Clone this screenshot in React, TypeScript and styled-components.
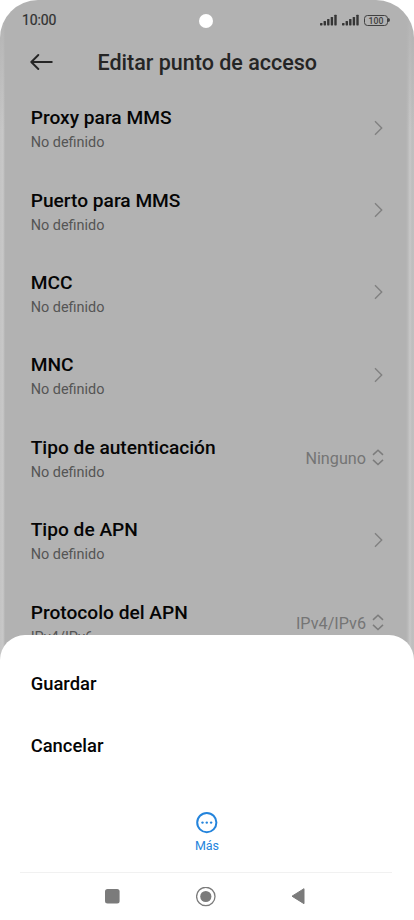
import React from "react";
import styled, { createGlobalStyle } from "styled-components";

const Global = createGlobalStyle`
  html, body { margin: 0; padding: 0; background: #fff; }
  body { font-family: Roboto, "Liberation Sans", sans-serif; }
  * { box-sizing: border-box; }
`;

const Phone = styled.div`
  position: relative;
  width: 414px;
  height: 920px;
  overflow: hidden;
  background: #fff;
`;

const Page = styled.div`
  height: 680px;
  overflow: hidden;
  border-radius: 38px 38px 0 0;
  background:
    linear-gradient(180deg, #b2b2b2 0, #b2b2b200 130px),
    linear-gradient(90deg, #c4c4c4 0, #c8c8c8 3px, #b2b2b2 5px, #b2b2b2 406px, #bababa 408px, #c8c8c8 410px, #bebebe 412px, #c0c0c0 414px);
`;

const StatusBar = styled.header`
  display: grid;
  grid-template-columns: 1fr 14px 1fr;
  align-items: center;
  height: 40px;
  padding: 0 24px 0 22px;
`;

const Clock = styled.span`
  font-size: 14px;
  font-weight: 400;
  letter-spacing: -0.15px;
  color: #303030;
  -webkit-text-stroke: 0.2px #303030;
`;

const Camera = styled.span`
  width: 14px;
  height: 14px;
  margin-top: 2px;
  border-radius: 50%;
  background: #fff;
`;

const Indicators = styled.div`
  display: flex;
  justify-content: flex-end;
  align-items: center;
  gap: 5px;
`;

const Battery = styled.div`
  display: flex;
  align-items: center;
`;

const BatteryCase = styled.span`
  width: 24px;
  height: 11px;
  border: 1px solid #404040;
  border-radius: 3.5px;
  font-size: 8.7px;
  font-weight: 500;
  line-height: 10px;
  text-align: center;
  color: #404040;
`;

const BatteryTip = styled.span`
  width: 2px;
  height: 4px;
  border-radius: 0 2px 2px 0;
  background: #404040;
`;

const TitleBar = styled.div`
  display: flex;
  align-items: center;
  height: 45px;
  padding-left: 30px;
  gap: 43.5px;
`;

const Title = styled.h1`
  margin: 0;
  font-size: 21.5px;
  font-weight: 500;
  line-height: 26px;
  padding-top: 1px;
  color: #252525;
  white-space: nowrap;
`;

const Settings = styled.main`
  padding: 1.5px 30px 0 30.7px;
`;

const Row = styled.div`
  display: flex;
  justify-content: space-between;
  align-items: center;
  height: 82.4px;
`;

const Labels = styled.div`
  display: flex;
  flex-direction: column;
  padding-top: 4px;
`;

const Name = styled.span`
  font-size: 19.15px;
  font-weight: 500;
  line-height: 26px;
  color: #050505;
`;

const Detail = styled.span`
  font-size: 14.45px;
  line-height: 23px;
  color: #555;
`;

const Choice = styled.div`
  display: flex;
  align-items: center;
  gap: 6px;
  padding-top: 2px;
  font-size: 16.2px;
  color: #757575;
`;

const Sheet = styled.section`
  position: absolute;
  inset: 635px 0 0;
  display: flex;
  flex-direction: column;
  border-radius: 25px 25px 0 0;
  background: #fff;
`;

const Options = styled.div`
  padding: 18px 30.7px 0;
  height: 172px;
`;

const Option = styled.div`
  height: 61.5px;
  line-height: 62px;
  font-size: 18.4px;
  font-weight: 500;
  color: #050505;
`;

const More = styled.div`
  display: flex;
  flex-direction: column;
  align-items: center;
  height: 65px;
  padding-top: 5px;
  gap: 4px;
  font-size: 12.5px;
  line-height: 16px;
  color: #2484dc;
`;

const NavBar = styled.nav`
  display: flex;
  height: 48px;
  margin: 0 22px 0 20px;
  padding: 0 87px 0 85px;
  border-top: 1px solid #f1f1f1;
  align-items: center;
  justify-content: space-between;
`;

const Signal = () => (
  <svg width="17" height="12" viewBox="0 0 17 12" fill="#363636">
    <rect x="0" y="9" width="2.5" height="2.4" rx=".6" />
    <rect x="3.6" y="7" width="2.4" height="4.4" rx=".6" />
    <rect x="7.1" y="5" width="2.4" height="6.4" rx=".6" />
    <rect x="10.7" y="3" width="2.4" height="8.4" rx=".6" />
    <rect x="14.3" y="0.7" width="2.4" height="10.7" rx=".6" />
  </svg>
);

const BackArrow = () => (
  <svg width="24" height="20" viewBox="0 0 24 20" fill="none" stroke="#262626" strokeWidth="1.9" strokeLinecap="round" strokeLinejoin="round">
    <path d="M21.8 9H1.5M8.3 2L1.3 9l7 7" />
  </svg>
);

const Chevron = () => (
  <svg width="10" height="16" viewBox="0 0 10 16" fill="none" stroke="#808080" strokeWidth="1.4">
    <path d="M1 1.3L7.7 8 1 14.7" />
  </svg>
);

const UpDown = () => (
  <svg width="12" height="18" viewBox="0 0 12 18" fill="none" stroke="#7c7c7c" strokeWidth="1.5">
    <path d="M1 5.9L6 1.3l5 4.6M1 10.9l5 4.6 5-4.6" />
  </svg>
);

const MoreIcon = () => (
  <svg width="22" height="22" viewBox="0 0 22 22" fill="#2484dc">
    <circle cx="10.8" cy="10.6" r="9.6" fill="none" stroke="#2484dc" strokeWidth="2" />
    <circle cx="6.5" cy="10.6" r="1.2" />
    <circle cx="10.8" cy="10.6" r="1.2" />
    <circle cx="15.1" cy="10.6" r="1.2" />
  </svg>
);

const settings = [
  { name: "Proxy para MMS", detail: "No definido" },
  { name: "Puerto para MMS", detail: "No definido" },
  { name: "MCC", detail: "No definido" },
  { name: "MNC", detail: "No definido" },
  { name: "Tipo de autenticación", detail: "No definido", choice: "Ninguno" },
  { name: "Tipo de APN", detail: "No definido" },
  { name: "Protocolo del APN", detail: "IPv4/IPv6", choice: "IPv4/IPv6" },
];

export default function App() {
  return (
    <Phone>
      <Global />
      <Page>
        <StatusBar>
          <Clock>10:00</Clock>
          <Camera />
          <Indicators>
            <Signal />
            <Signal />
            <Battery>
              <BatteryCase>100</BatteryCase>
              <BatteryTip />
            </Battery>
          </Indicators>
        </StatusBar>
        <TitleBar>
          <BackArrow />
          <Title>Editar punto de acceso</Title>
        </TitleBar>
        <Settings>
          {settings.map((s) => (
            <Row key={s.name}>
              <Labels>
                <Name>{s.name}</Name>
                <Detail>{s.detail}</Detail>
              </Labels>
              {s.choice ? (
                <Choice>
                  {s.choice}
                  <UpDown />
                </Choice>
              ) : (
                <Chevron />
              )}
            </Row>
          ))}
        </Settings>
      </Page>
      <Sheet>
        <Options>
          <Option>Guardar</Option>
          <Option>Cancelar</Option>
        </Options>
        <More>
          <MoreIcon />
          Más
        </More>
        <NavBar>
          <svg width="15" height="15" viewBox="0 0 15 15">
            <rect width="14.6" height="14.6" rx="2.5" fill="#7b7b7b" />
          </svg>
          <svg width="20" height="20" viewBox="0 0 20 20">
            <circle cx="9.8" cy="9.5" r="9.2" fill="none" stroke="#7b7b7b" strokeWidth="1.3" />
            <circle cx="9.8" cy="9.5" r="5.6" fill="#7b7b7b" />
          </svg>
          <svg width="14" height="17" viewBox="0 0 14 17">
            <path d="M13 .7v15L1 8.2z" fill="#7b7b7b" stroke="#7b7b7b" strokeLinejoin="round" />
          </svg>
        </NavBar>
      </Sheet>
    </Phone>
  );
}
